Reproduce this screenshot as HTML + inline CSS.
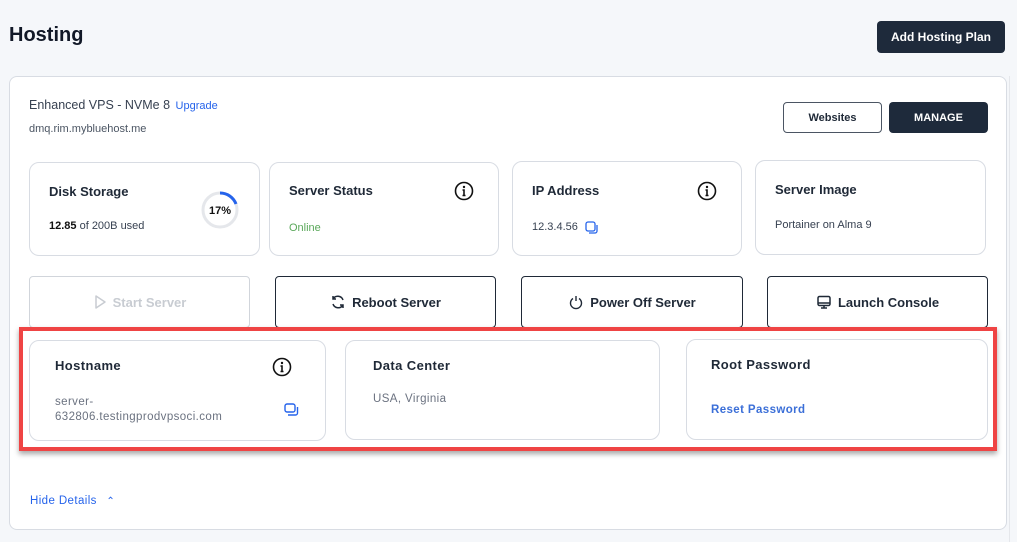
<!DOCTYPE html>
<html><head><meta charset="utf-8"><style>
*{box-sizing:border-box;margin:0;padding:0}
body{width:1017px;height:542px;background:#f5f7fa;font-family:"Liberation Sans",Arial,sans-serif;position:relative;overflow:hidden;color:#1f2937}
.a{position:absolute}
.card{position:absolute;background:#fff;border:1px solid #d8dce3;border-radius:10px}
.t{position:absolute;font-weight:bold;font-size:13px;color:#1f2937}
.s{position:absolute;font-size:11px;color:#374151}
.btn{position:absolute;border:1px solid #1f2937;border-radius:4px;background:#fff;display:flex;align-items:center;justify-content:center;font-weight:bold;font-size:13px;color:#1f2937;gap:6px}
.w{letter-spacing:.4px}
</style></head><body>
<div class="a" style="left:9px;top:24px;font-size:20px;font-weight:bold;color:#111827">Hosting</div>
<div class="a" style="left:877px;top:21px;width:128px;height:32px;background:#1e2a3b;border-radius:4px;color:#fff;font-size:12px;font-weight:bold;display:flex;align-items:center;justify-content:center">Add Hosting Plan</div>

<div class="a" style="left:9px;top:76px;width:998px;height:454px;background:#fff;border:1px solid #d8dce3;border-radius:8px"></div>
<div class="a" style="left:1009px;top:76px;width:1px;height:466px;background:#e5e7eb"></div>

<div class="a" style="left:29px;top:98px;font-size:12.5px;color:#374151">Enhanced VPS - NVMe 8 <span style="color:#2563eb;font-size:11px;margin-left:2px">Upgrade</span></div>
<div class="a" style="left:29px;top:123px;font-size:11px;color:#4b5563">dmq.rim.mybluehost.me</div>
<div class="a" style="left:783px;top:102px;width:99px;height:31px;border:1px solid #4b5563;border-radius:4px;display:flex;align-items:center;justify-content:center;font-size:11px;font-weight:bold;color:#1f2937">Websites</div>
<div class="a" style="left:889px;top:102px;width:99px;height:31px;background:#1e2a3b;border-radius:4px;display:flex;align-items:center;justify-content:center;font-size:11px;font-weight:bold;color:#fff">MANAGE</div>

<div class="card" style="left:29px;top:162px;width:231px;height:94px"></div>
<div class="t" style="left:49px;top:184px">Disk Storage</div>
<div class="s" style="left:49px;top:220px"><b style="color:#111">12.85</b> of 200B used</div>
<svg class="a" style="left:200px;top:190px" width="40" height="40"><circle cx="20" cy="20" r="17" fill="none" stroke="#e5e7eb" stroke-width="3"/><path d="M20 3 A17 17 0 0 1 36 14" fill="none" stroke="#2563eb" stroke-width="3"/><text x="20" y="24" text-anchor="middle" font-size="11" font-weight="bold" font-family="Liberation Sans" fill="#111">17%</text></svg>

<div class="card" style="left:269px;top:162px;width:230px;height:94px"></div>
<div class="t" style="left:289px;top:183px">Server Status</div>
<div class="s" style="left:289px;top:222px;color:#5aa85a">Online</div>
<svg class="a" style="left:454px;top:181px" width="20" height="20"><circle cx="10" cy="10" r="8.5" fill="none" stroke="#111" stroke-width="1.6"/><circle cx="10" cy="6" r="1.2" fill="#111"/><path d="M8.5 9H10V14.5M8.5 14.5H11.5" stroke="#111" stroke-width="1.6" fill="none"/></svg>

<div class="card" style="left:512px;top:161px;width:230px;height:95px"></div>
<div class="t" style="left:532px;top:183px">IP Address</div>
<div class="s" style="left:532px;top:221px">12.3.4.56</div>
<svg class="a" style="left:585px;top:221px" width="13" height="13"><rect x="1" y="1" width="9" height="9" rx="2" fill="none" stroke="#2563eb" stroke-width="1.3"/><path d="M12 4V10A2 2 0 0 1 10 12H4" fill="none" stroke="#2563eb" stroke-width="1.3"/></svg>
<svg class="a" style="left:697px;top:181px" width="20" height="20"><circle cx="10" cy="10" r="8.5" fill="none" stroke="#111" stroke-width="1.6"/><circle cx="10" cy="6" r="1.2" fill="#111"/><path d="M8.5 9H10V14.5M8.5 14.5H11.5" stroke="#111" stroke-width="1.6" fill="none"/></svg>

<div class="card" style="left:755px;top:160px;width:231px;height:95px"></div>
<div class="t" style="left:775px;top:182px">Server Image</div>
<div class="s" style="left:775px;top:219px">Portainer on Alma 9</div>

<div class="btn" style="left:29px;top:276px;width:221px;height:52px;border-color:#d1d5db;color:#c8ccd2"><svg width="14" height="16"><path d="M3 2L12 8L3 14Z" fill="none" stroke="#c8ccd2" stroke-width="1.5" stroke-linejoin="round"/></svg>Start Server</div>
<div class="btn" style="left:275px;top:276px;width:221px;height:52px"><svg width="16" height="16"><path d="M13 6A5.5 5.5 0 0 0 3 5M3 2V5H6M3 10A5.5 5.5 0 0 0 13 11M13 14V11H10" fill="none" stroke="#1f2937" stroke-width="1.5"/></svg>Reboot Server</div>
<div class="btn" style="left:521px;top:276px;width:222px;height:52px"><svg width="16" height="16"><path d="M5 4.5A5.5 5.5 0 1 0 11 4.5M8 2V7" fill="none" stroke="#1f2937" stroke-width="1.4"/></svg>Power Off Server</div>
<div class="btn" style="left:767px;top:276px;width:221px;height:52px"><svg width="16" height="16"><rect x="2" y="2.5" width="12" height="9" rx="1.5" fill="none" stroke="#1f2937" stroke-width="1.5"/><path d="M2 9H14M8 11.5V14M5 14H11" stroke="#1f2937" stroke-width="1.5"/></svg>Launch Console</div>

<div class="a" style="left:19px;top:327px;width:978px;height:124px;border:4px solid #ef4444;box-shadow:0 3px 5px rgba(0,0,0,.35)"></div>
<div class="card" style="left:29px;top:340px;width:297px;height:101px"></div>
<div class="t w" style="left:55px;top:358px;font-size:13px">Hostname</div>
<div class="s w" style="left:55px;top:395px;color:#6b7280;font-size:11.5px;line-height:15px">server-<br>632806.testingprodvpsoci.com</div>
<svg class="a" style="left:284px;top:403px" width="15" height="13"><rect x="1" y="1" width="10" height="8" rx="2" fill="none" stroke="#2563eb" stroke-width="1.4"/><path d="M13.5 4V10A2 2 0 0 1 11.5 12H4" fill="none" stroke="#2563eb" stroke-width="1.4"/></svg>
<svg class="a" style="left:271px;top:357px" width="22" height="20"><circle cx="11" cy="10" r="8.5" fill="none" stroke="#111" stroke-width="1.6"/><circle cx="11" cy="6" r="1.2" fill="#111"/><path d="M9.5 9H11V14.5M9.5 14.5H12.5" stroke="#111" stroke-width="1.6" fill="none"/></svg>

<div class="card" style="left:345px;top:340px;width:315px;height:100px"></div>
<div class="t w" style="left:373px;top:358px;font-size:13px">Data Center</div>
<div class="s w" style="left:373px;top:393px;color:#6b7280;font-size:11.5px">USA, Virginia</div>

<div class="card" style="left:686px;top:339px;width:302px;height:101px"></div>
<div class="t w" style="left:711px;top:357px;font-size:13px">Root Password</div>
<div class="s w" style="left:711px;top:404px;color:#3b6fd8;font-weight:bold;font-size:11.5px">Reset Password</div>

<div class="a w" style="left:30px;top:495px;font-size:11.5px;color:#2563eb">Hide Details <span style="margin-left:6px;font-size:10px">&#8963;</span></div>
</body></html>
